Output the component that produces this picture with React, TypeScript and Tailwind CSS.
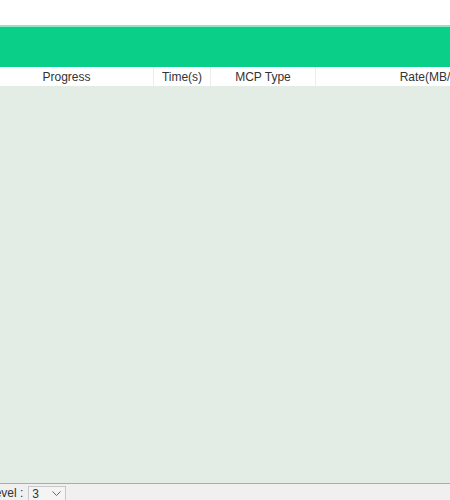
const columns = [
  { label: 'Progress', width: 'w-[154px]', pad: 'pr-[20px]' },
  { label: 'Time(s)', width: 'w-[57px]', pad: '' },
  { label: 'MCP Type', width: 'w-[105px]', pad: '' },
  { label: 'Rate(MB/s)', width: 'w-[228px]', pad: '' },
]

const App = () => {
  return (
    <div className="flex h-[500px] w-[450px] flex-col overflow-hidden bg-white font-['Liberation_Sans',Arial,sans-serif] text-[12px] text-[#333]">
      {/* top strip */}
      <div className="h-[25px] shrink-0 bg-white" />
      <div className="h-[2px] shrink-0 bg-[#8fe6c4]" />
      {/* title bar */}
      <div className="h-[40px] shrink-0 bg-[#0acf88]" />
      {/* table header */}
      <div className="flex h-[19px] shrink-0 bg-white">
        {columns.map((col, i) => (
          <div
            key={col.label}
            className={`flex shrink-0 items-center justify-center whitespace-nowrap leading-none ${col.width} ${col.pad} ${
              i < columns.length - 1 ? 'border-r border-[#ececec]' : ''
            }`}
          >
            {col.label}
          </div>
        ))}
      </div>
      {/* table body */}
      <div className="flex-1 bg-[#e3ece5]" />
      {/* status bar */}
      <div className="h-[1px] shrink-0 bg-[#a9aeab]" />
      <div className="flex h-[16px] shrink-0 items-end bg-[#f0f0f0]">
        <div className="flex h-[14px] items-center">
          <span className="ml-[-12px] whitespace-nowrap">Level :</span>
          <div className="ml-[5px] flex h-[14px] w-[38px] items-center justify-between border border-b-0 border-[#c8c8c8] bg-[#f4f4f4] pl-[3px] pr-[4px]">
            <span className="leading-none">3</span>
            <svg width="9" height="6" viewBox="0 0 9 6" fill="none" stroke="#666" strokeWidth="1">
              <path d="M0.5 0.5 L4.5 4.5 L8.5 0.5" />
            </svg>
          </div>
        </div>
      </div>
    </div>
  )
}

export default App
